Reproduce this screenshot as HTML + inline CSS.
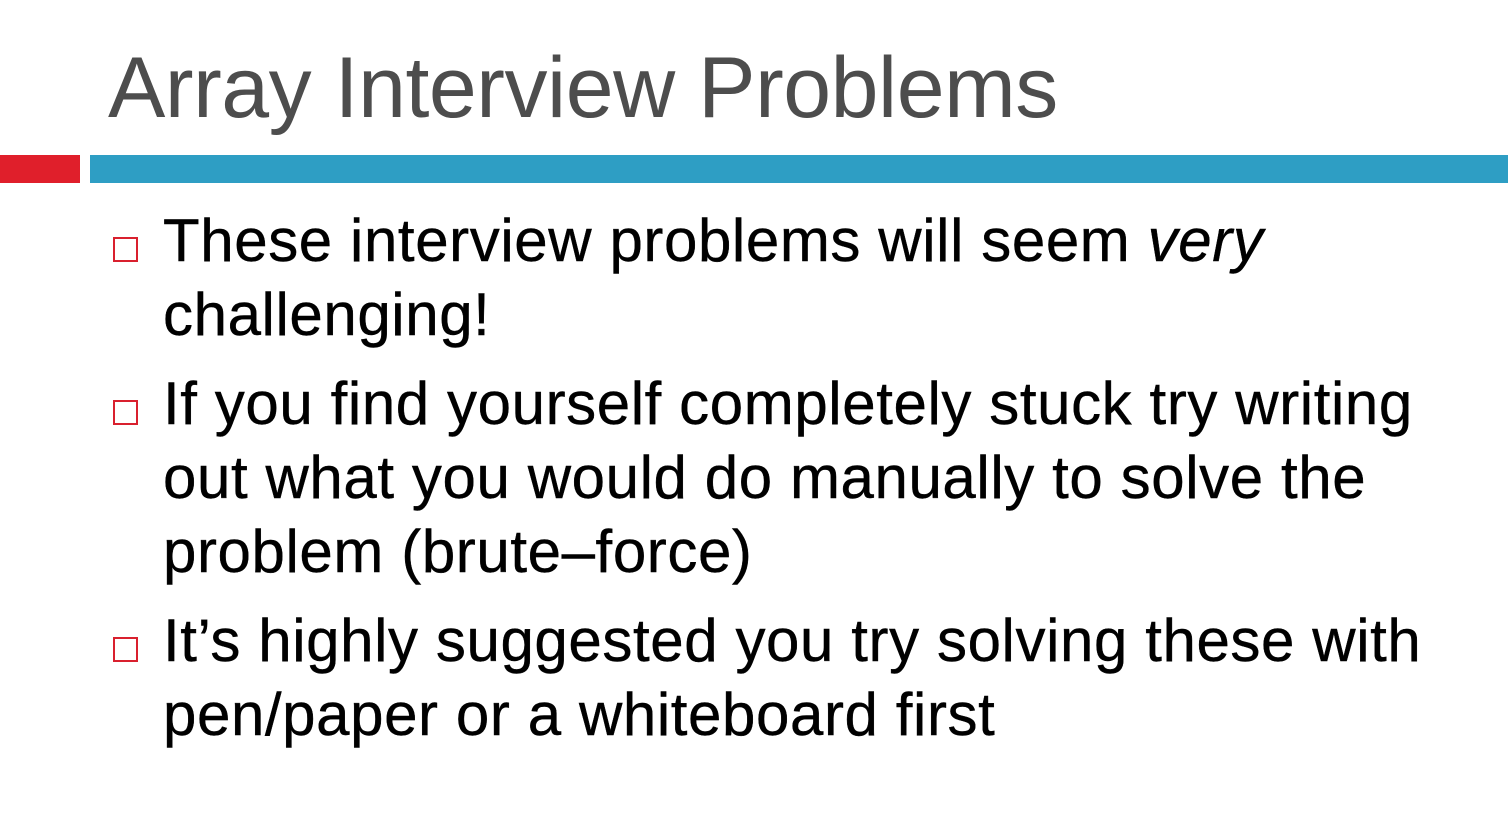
<!DOCTYPE html>
<html><head><meta charset="utf-8"><style>
html,body{margin:0;padding:0;width:1508px;height:840px;background:#fff;overflow:hidden;position:relative;font-family:"Liberation Sans",Arial,sans-serif}
.t{position:absolute;left:108px;top:38px;font-size:86px;line-height:100px;color:#4d4d4d;white-space:nowrap;letter-spacing:-0.45px}
.r{position:absolute;left:0;top:155px;width:80px;height:28px;background:#e01f2b}
.b{position:absolute;left:90px;top:155px;width:1418px;height:28px;background:#2e9ec4}
.l{position:absolute;left:163px;font-size:60px;line-height:74px;color:#000;white-space:nowrap;letter-spacing:0.6px;-webkit-text-stroke:0.4px #000}
.sq{position:absolute;left:113px;width:21px;height:21px;border:2px solid #d9202e}
</style></head><body>
<div class="t">Array Interview Problems</div>
<div class="r"></div><div class="b"></div>
<div class="sq" style="top:237px"></div>
<div class="l" style="top:204px">These interview problems will seem <i>very</i></div>
<div class="l" style="top:278px">challenging!</div>
<div class="sq" style="top:400px"></div>
<div class="l" style="top:367px">If you find yourself completely stuck try writing</div>
<div class="l" style="top:441px">out what you would do manually to solve the</div>
<div class="l" style="top:515px">problem (brute–force)</div>
<div class="sq" style="top:637px"></div>
<div class="l" style="top:604px">It’s highly suggested you try solving these with</div>
<div class="l" style="top:678px">pen/paper or a whiteboard first</div>
</body></html>
